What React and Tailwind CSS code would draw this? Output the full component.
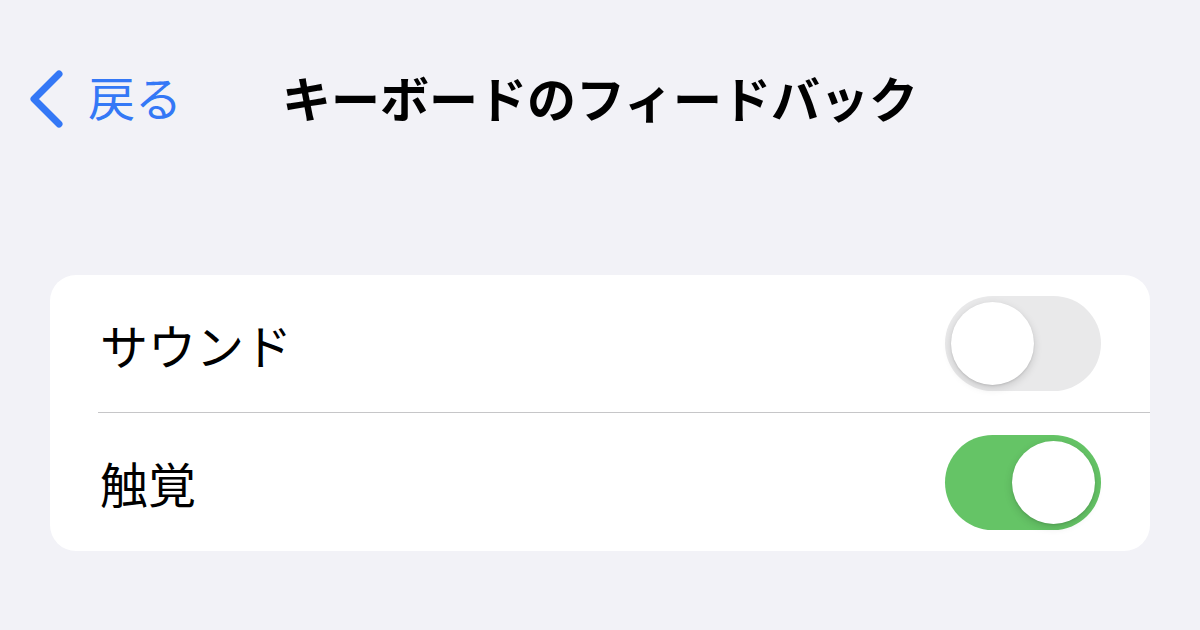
import React, { useState } from 'react';

const font = { fontFamily: '"Noto Sans CJK JP", "Noto Sans", sans-serif' };

function Toggle({ on, onChange }) {
  return (
    <button
      onClick={onChange}
      className={`relative w-[156px] h-[95px] rounded-full shrink-0 ${on ? 'bg-[#65c466]' : 'bg-[#e9e9ea]'}`}
    >
      <span
        className={`absolute top-[6px] w-[83px] h-[83px] rounded-full bg-white shadow-[0_3px_8px_rgba(0,0,0,0.15),0_1px_2px_rgba(0,0,0,0.1)] ${on ? 'left-[67px]' : 'left-[6px]'}`}
      />
    </button>
  );
}

export default function App() {
  const [sound, setSound] = useState(false);
  const [haptic, setHaptic] = useState(true);

  return (
    <div className="w-[1200px] h-[630px] bg-[#f2f2f7] overflow-hidden" style={font}>
      {/* Nav bar */}
      <div className="relative h-[100px] mt-[50px] flex items-center">
        <button className="flex items-center pl-[28px] text-[#3478f6]">
          <svg width="36" height="58" viewBox="0 0 36 58" fill="none" className="relative top-[-1px]">
            <path d="M31 4 L6 29 L31 54" stroke="currentColor" strokeWidth="7" strokeLinecap="round" strokeLinejoin="round" />
          </svg>
          <span className="relative top-[-5px] ml-[24px] text-[47px] leading-none">戻る</span>
        </button>
        <h1 className="absolute left-0 right-0 top-[22px] text-center text-[49px] font-bold leading-none text-black pointer-events-none">
          キーボードのフィードバック
        </h1>
      </div>

      {/* Settings group */}
      <div className="mt-[125px] mx-[50px] bg-white rounded-[26px] overflow-hidden">
        <div className="flex items-center justify-between h-[137px] pl-[50px] pr-[49px]">
          <span className="text-[48px] text-black leading-none">サウンド</span>
          <Toggle on={sound} onChange={() => setSound(!sound)} />
        </div>
        <div className="ml-[48px] h-px bg-[#c6c6c8]" />
        <div className="flex items-center justify-between h-[138px] pl-[50px] pr-[49px]">
          <span className="text-[48px] text-black leading-none">触覚</span>
          <Toggle on={haptic} onChange={() => setHaptic(!haptic)} />
        </div>
      </div>
    </div>
  );
}
